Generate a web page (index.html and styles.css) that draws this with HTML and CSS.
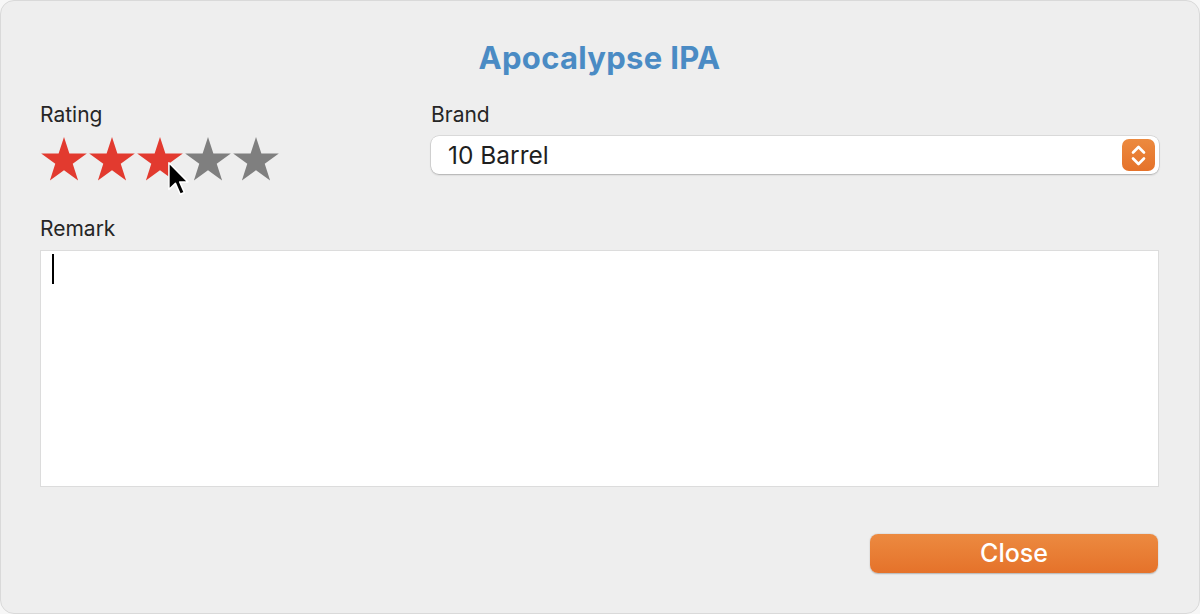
FILE: index.html
```html
<!DOCTYPE html>
<html lang="en">
<head>
<meta charset="utf-8">
<title>Apocalypse IPA</title>
<link rel="stylesheet" href="styles.css">
</head>
<body>
<div class="window">
  <h1 class="title">Apocalypse IPA</h1>
  <div class="fields">
    <div class="field rating-field">
      <div class="label">Rating</div>
      <div class="stars">
        <svg class="star on" viewBox="0 0 48 44"><polygon points="24,0 29.39,16.58 46.83,16.58 32.72,26.83 38.11,43.42 24,33.17 9.89,43.42 15.28,26.83 1.17,16.58 18.61,16.58"/></svg>
        <svg class="star on" viewBox="0 0 48 44"><polygon points="24,0 29.39,16.58 46.83,16.58 32.72,26.83 38.11,43.42 24,33.17 9.89,43.42 15.28,26.83 1.17,16.58 18.61,16.58"/></svg>
        <svg class="star on" viewBox="0 0 48 44"><polygon points="24,0 29.39,16.58 46.83,16.58 32.72,26.83 38.11,43.42 24,33.17 9.89,43.42 15.28,26.83 1.17,16.58 18.61,16.58"/></svg>
        <svg class="star off" viewBox="0 0 48 44"><polygon points="24,0 29.39,16.58 46.83,16.58 32.72,26.83 38.11,43.42 24,33.17 9.89,43.42 15.28,26.83 1.17,16.58 18.61,16.58"/></svg>
        <svg class="star off" viewBox="0 0 48 44"><polygon points="24,0 29.39,16.58 46.83,16.58 32.72,26.83 38.11,43.42 24,33.17 9.89,43.42 15.28,26.83 1.17,16.58 18.61,16.58"/></svg>
        <svg class="cursor" viewBox="0 0 20 32"><path d="M1.5,1.5 L1.5,24 L7,18.8 L11,28 L14.5,26.5 L10.6,17.6 L17.5,17.6 Z"/></svg>
      </div>
    </div>
    <div class="field brand-field">
      <div class="label">Brand</div>
      <div class="select">
        <span class="select-value">10 Barrel</span>
        <span class="stepper">
          <svg viewBox="0 0 14 20"><path d="M2.5,7.5 L7,3 L11.5,7.5 M2.5,12.5 L7,17 L11.5,12.5"/></svg>
        </span>
      </div>
    </div>
  </div>
  <div class="label remark-label">Remark</div>
  <div class="textarea"><span class="caret"></span></div>
  <div class="actions">
    <button class="close-btn">Close</button>
  </div>
</div>
</body>
</html>
```

FILE: styles.css
```css
* { box-sizing: border-box; }
html, body { margin: 0; padding: 0; }
body {
  background: #f7f7f7;
  font-family: "Inter", "Roboto", "Liberation Sans", sans-serif;
  color: #262626;
}
.window {
  width: 1200px;
  height: 614px;
  background: #eeeeee;
  border-radius: 14px;
  border: 1px solid #d9d9d9;
  padding: 38px 40px 0 39px;
  display: flex;
  flex-direction: column;
}
.title {
  margin: 0;
  text-align: center;
  font-size: 31px;
  line-height: 38px;
  font-weight: 700;
  color: #4a8bc4;
  letter-spacing: 0.3px;
}
.fields {
  margin-top: 26px;
  display: grid;
  grid-template-columns: 391px 1fr;
}
.label {
  font-size: 21px;
  line-height: 24px;
  color: #262626;
}
.stars {
  position: relative;
  display: flex;
  margin-top: 10px;
  height: 44px;
}
.star {
  width: 48px;
  height: 44px;
  display: block;
}
.star.on polygon { fill: #e23a2f; }
.star.off polygon { fill: #7f7f7f; }
.cursor {
  position: absolute;
  left: 127px;
  top: 24px;
  width: 24px;
  height: 38px;
}
.cursor path {
  fill: #000;
  stroke: #fff;
  stroke-width: 1.3;
  stroke-linejoin: round;
}
.select {
  margin-top: 9px;
  height: 38px;
  background: #fff;
  border-radius: 8px;
  box-shadow: 0 0 0 0.5px rgba(0,0,0,0.16), 0 1px 2px rgba(0,0,0,0.2);
  display: flex;
  align-items: center;
  justify-content: space-between;
  padding: 0 4px 0 17px;
}
.select-value {
  font-size: 24.5px;
  color: #1f1f1f;
}
.stepper {
  width: 33px;
  height: 32px;
  border-radius: 7px;
  background: linear-gradient(#ec8a3f, #e5722a);
  display: flex;
  align-items: center;
  justify-content: center;
}
.stepper svg {
  width: 17px;
  height: 25px;
}
.stepper path {
  fill: none;
  stroke: #fff;
  stroke-width: 2.2;
  stroke-linecap: round;
  stroke-linejoin: round;
}
.remark-label {
  margin-top: 36px;
}
.textarea {
  margin-top: 9px;
  height: 237px;
  background: #fff;
  border: 1px solid #dcdcdc;
  padding: 3px 0 0 11px;
}
.caret {
  display: block;
  width: 2px;
  height: 30px;
  background: #000;
}
.actions {
  margin-top: 47px;
  display: flex;
  justify-content: flex-end;
  padding-right: 1px;
}
.close-btn {
  width: 288px;
  height: 39px;
  border: none;
  border-radius: 8px;
  background: linear-gradient(#ec8a40, #e5722a);
  box-shadow: 0 0.5px 1.5px rgba(0,0,0,0.25);
  color: #fff;
  font-family: "Inter", "Roboto", "Liberation Sans", sans-serif;
  font-size: 25px;
  font-weight: 500;
  line-height: 39px;
  padding: 0;
}
```
